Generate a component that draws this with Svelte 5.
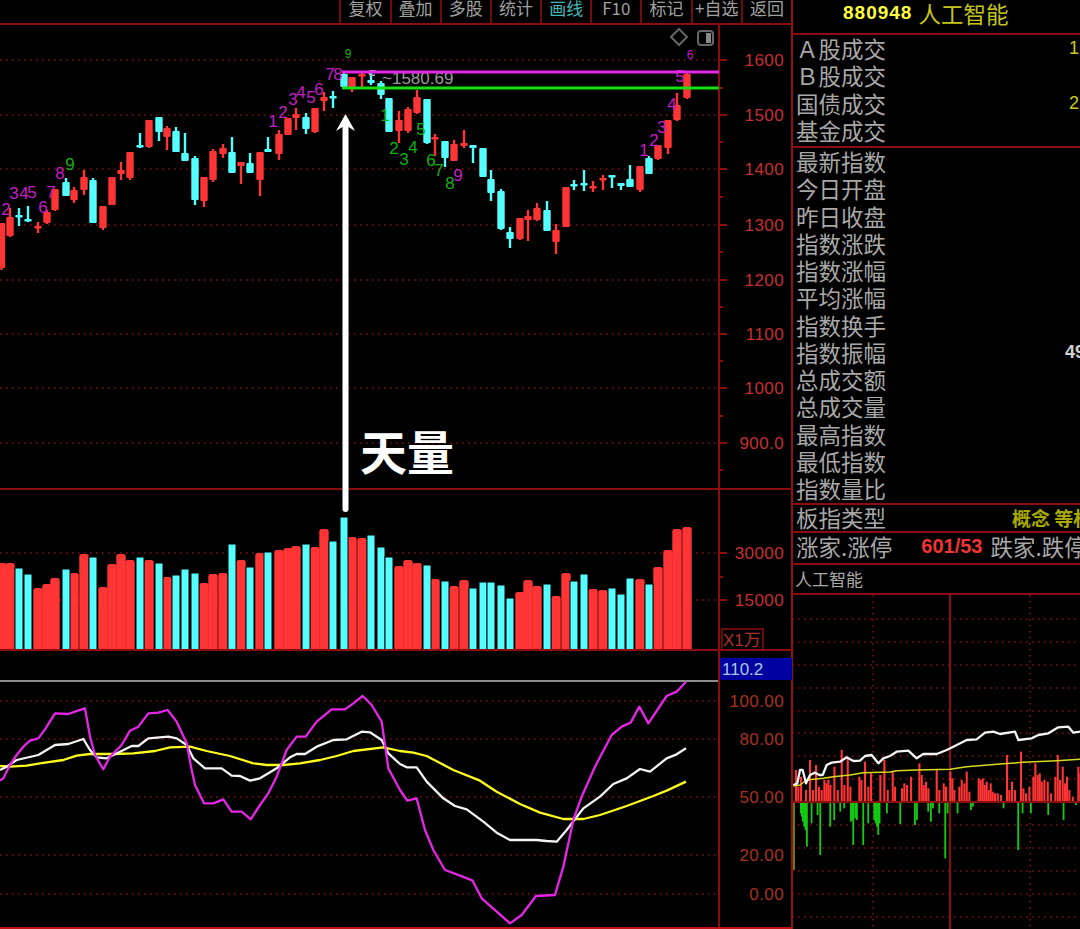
<script>
	// x, high, body top, body bottom, low, colour, volume top (all in page pixels)
	const candles = [
		[1.5,223,223,268,270,'r',563],[10,208,217,236,237,'r',563],[19,208,215,217,226,'c',568],[28,206,219,221,222,'c',574],
		[38,222,226,228,233,'r',588],[47,210,212,223,224,'r',584],[55,189,189,210,211,'r',578],[66,178,182,196,196,'c',569],
		[74,187,190,200,203,'r',573],[84,170,177,190,195,'r',554],[93,178,180,223,223,'c',557],[103,206,206,228,230,'r',587],
		[112,177,177,205,205,'r',564],[121,162,170,174,180,'r',554],[130,152,152,178,180,'r',560],[140,133,145,147,148,'c',557],
		[149,120,120,147,148,'r',560],[159,117,117,132,141,'c',563],[167,126,128,137,150,'r',577],[176,127,131,152,152,'c',575],
		[185,133,153,161,161,'c',569],[195,156,158,200,205,'c',573],[204,177,177,201,207,'r',583],[213,149,151,180,182,'r',574],
		[223,144,148,154,158,'r',573],[232,137,152,173,173,'c',544],[241,162,162,166,184,'r',560],[250,153,163,173,173,'c',567],
		[260,152,152,180,196,'r',553],[268,137,149,152,152,'c',552],[279,130,134,154,160,'r',550],[288,118,118,135,135,'r',548],
		[296,108,114,118,130,'r',546],[306,113,117,129,134,'c',544],[315,108,108,132,133,'r',547],[324,92,97,101,111,'r',529],
		[333,91,96,98,108,'c',541],[344,73,74,87,87,'c',517],[352,77,77,87,92,'r',537],[362,73,74,76,87,'r',538],
		[371,70,80,83,85,'c',535],[381,81,83,95,99,'c',547],[389,98,98,132,132,'c',557],[399,111,120,131,143,'r',566],
		[408,107,109,131,133,'r',560],[417,90,97,113,114,'r',563],[427,99,99,143,144,'c',565],[435,134,137,139,156,'r',579],
		[445,141,141,158,167,'c',581],[454,140,144,161,161,'r',586],[464,130,143,146,148,'r',580],[473,145,145,148,163,'c',588],
		[483,148,148,177,177,'c',582],[491,170,179,193,201,'c',582],[501,189,191,229,230,'c',585],[510,227,232,239,248,'c',598],
		[520,218,218,239,240,'r',592],[528,210,216,220,241,'r',580],[537,203,208,220,221,'r',586],[547,201,210,231,231,'c',584],
		[556,224,230,242,254,'r',596],[566,187,187,227,227,'r',573],[574,180,184,186,190,'c',581],[584,170,183,185,191,'c',574],
		[593,181,186,188,192,'r',589],[603,175,178,180,190,'r',590],[612,175,175,177,188,'c',588],[621,183,183,186,190,'c',594],
		[630,165,179,187,187,'c',578],[640,166,166,190,192,'r',579],[649,156,158,174,174,'c',584],[658,145,145,159,160,'r',567],
		[668,120,120,148,154,'r',550],[677,93,105,120,121,'r',529],[687,73,74,98,99,'r',527]
	];
	const colors = { r: '#ff3434', c: '#55ffff' };
	const redBars = candles.filter((c) => c[5] === 'r');
	const cyanBars = candles.filter((c) => c[5] === 'c');

	const priceLabels = [[60,'1600'],[115,'1500'],[169,'1400'],[225,'1300'],[280,'1200'],[334,'1100'],[388,'1000'],[443,'900.0']];
	const priceMinor = [88,142,197,252,307,361,416,470];
	const indexLabels = [[701,'100.00'],[739,'80.00'],[797,'50.00'],[855,'20.00'],[894,'0.00']];

	// turn-count digits over the candles
	const counts = [
		[6,209,'2'],[14,193,'3'],[24,193,'4'],[32,192,'5'],[43,207,'6'],[51,192,'7'],[60,173,'8'],[273,121,'1'],[283,112,'2'],
		[293,99,'3'],[301,92,'4'],[311,97,'5'],[319,89,'6'],[330,74,'7'],[338,74,'8'],[458,175,'9'],[644,150,'1'],[654,140,'2'],
		[662,127,'3'],[672,104,'4'],[680,76,'5']
	];
	const downCounts = [
		[70,164,'9'],[385,115,'1'],[394,148,'2'],[404,159,'3'],[413,147,'4'],[421,129,'5'],[431,160,'6'],[439,170,'7'],[450,183,'8']
	];

	const tools = ['复权','叠加','多股','统计','画线','F10','标记','+自选','返回'];
	const tradeRows = [['Ａ股成交','1'],['Ｂ股成交',''],['国债成交','2'],['基金成交','']];
	const indexRows = ['最新指数','今日开盘','昨日收盘','指数涨跌','指数涨幅','平均涨幅','指数换手','指数振幅','总成交额','总成交量','最高指数','最低指数','指数量比'];

	// lines were read off 3x crops, so points are crop coordinates
	const crop = (a, ox, oy) => a.map(([x, y]) => `${ox + x / 3},${oy + y / 3}`).join(' ');

	const pinkLine = crop([[0,332],[10,325],[30,285],[50,255],[70,230],[90,212],[115,205],[135,178],[165,130],[205,132],[225,125],[255,115],[270,200],[285,255],[310,298],[330,260],[350,240],[365,225],[390,182],[415,170],[445,130],[475,128],[503,120],[530,155],[560,220],[575,300],[585,345],[612,400],[640,400],[670,388],[695,425],[725,425],[752,448],[780,405],[805,370],[830,320],[860,240],[890,200],[917,200],[950,155],[995,118],[1035,118],[1060,100],[1088,78],[1115,105],[1145,155],[1165,295],[1200,360]], 0, 670)
		+ ' ' + crop([[22,392],[50,385],[75,480],[100,540],[135,600],[180,617],[218,632],[245,685],[330,760],[365,735],[408,678],[465,675],[490,590],[520,450],[545,380],[585,290],[635,195],[665,170],[692,158],[718,110],[745,160],[800,78],[830,65],[858,35]], 400, 670);
	const whiteLine = crop([[0,300],[20,290],[50,270],[115,255],[165,225],[205,222],[250,207],[270,240],[290,262],[320,265],[360,245],[395,228],[415,228],[445,205],[505,200],[530,205],[560,225],[580,265],[615,295],[665,295],[695,317],[720,318],[750,332],[780,325],[830,295],[870,262],[890,252],[915,252],[950,230],[1000,210],[1040,208],[1085,185],[1110,187],[1145,210],[1165,250],[1200,282]], 0, 670)
		+ ' ' + crop([[20,292],[50,292],[80,335],[130,385],[165,408],[200,418],[250,455],[290,488],[330,510],[410,510],[440,513],[470,515],[500,480],[550,415],[600,380],[640,342],[680,325],[720,297],[750,305],[800,265],[830,253],[858,235]], 400, 670);
	const yellowLine = crop([[0,288],[30,290],[80,287],[120,280],[190,270],[230,257],[270,252],[340,252],[400,250],[465,243],[510,232],[570,230],[620,243],[690,258],[760,280],[800,285],[850,285],[900,280],[960,270],[1010,258],[1060,243],[1150,232],[1200,243]], 0, 670)
		+ ' ' + crop([[40,248],[80,258],[160,300],[240,332],[290,365],[360,402],[420,428],[490,447],[550,447],[600,435],[680,408],[760,378],[800,362],[858,335]], 400, 670);

	const miniPrice = crop([[10,555],[22,550],[30,510],[38,510],[48,550],[60,525],[75,518],[88,525],[98,525],[110,495],[125,488],[150,485],[170,472],[190,483],[210,482],[225,468],[245,465],[265,490],[280,475],[300,468],[320,455],[355,452],[380,475],[400,462],[440,462],[470,450],[490,440],[530,420],[560,418],[585,398],[610,395],[630,402],[675,395],[685,420],[725,415],[745,405],[775,400],[805,382],[835,380],[850,398],[870,395]], 790, 600);
	const miniAvg = crop([[10,558],[30,555],[50,540],[100,535],[130,530],[180,525],[220,518],[300,516],[320,512],[380,510],[480,508],[530,500],[630,492],[700,487],[800,482],[870,478]], 790, 600);
	const miniUp = [[15,510],[22,560],[30,530],[45,570],[57,480],[66,570],[75,495],[84,560],[92,570],[100,540],[106,550],[112,540],[118,555],[130,500],[140,570],[152,450],[160,555],[170,470],[178,560],[205,530],[211,540],[222,485],[232,560],[240,520],[268,525],[280,480],[290,570],[305,515],[312,560],[333,565],[340,550],[348,555],[360,530],[385,490],[392,525],[398,555],[405,545],[412,565],[437,510],[445,570],[458,550],[465,560],[478,515],[484,535],[490,570],[505,560],[512,540],[520,550],[527,515],[535,575],[563,535],[569,540],[575,535],[581,555],[587,545],[593,570],[599,550],[605,575],[612,580],[620,580],[630,585],[648,465],[655,570],[663,545],[672,570],[690,455],[697,565],[705,580],[715,560],[727,530],[733,490],[740,525],[746,520],[752,545],[760,540],[770,545],[780,580],[793,530],[800,465],[807,540],[815,500],[822,550],[828,530],[835,570],[845,590],[862,500],[868,520]];
	const miniDown = [[30,640],[33,650],[36,665],[40,680],[44,690],[48,740],[62,670],[80,645],[88,765],[118,680],[130,660],[148,635],[160,625],[180,665],[184,660],[187,735],[193,655],[198,660],[217,735],[232,670],[250,660],[254,670],[258,680],[262,705],[266,670],[288,640],[328,672],[372,675],[378,660],[412,635],[420,665],[426,625],[445,640],[463,775],[470,640],[500,640],[540,630],[546,620],[638,625],[682,750],[695,640],[720,640],[772,645],[818,660],[855,615]];
	const miniGrid = [619,642,665,688,711,733,756,779,825,848,871,894,917];
</script>

<div class="screen">
	<div class="main">
		<div class="tools">
			{#each tools as t}
				<div class="tool" class:on={t === '画线'}>{t}</div>
			{/each}
		</div>

		<svg class="pane price" viewBox="0 25 792 463">
			{#each priceLabels as [y, label]}
				<line class="dots" x1="0" x2="719" y1={y} y2={y} />
				<line class="tick" x1="719" x2="727" y1={y} y2={y} />
				<text class="axis" x="784" y={y + 6}>{label}</text>
			{/each}
			{#each priceMinor as y}
				<line class="tick" x1="719" x2="723" y1={y} y2={y} />
			{/each}
			<line class="frame" x1="719" x2="719" y1="25" y2="489" />

			{#each candles as [x, high, top, bottom, low, c]}
				<rect x={x - 1.2} y={high} width="2.4" height={low - high} fill={colors[c]} />
				<rect x={x - 3.7} y={top} width="7.4" height={Math.max(bottom - top, 2.5)} rx="1" fill={colors[c]} />
			{/each}

			{#each counts as [x, y, n]}
				<text class="count up" {x} y={y + 6}>{n}</text>
			{/each}
			{#each downCounts as [x, y, n]}
				<text class="count down" {x} y={y + 6}>{n}</text>
			{/each}
			<text class="count small down" x="348" y="58">9</text>
			<text class="count small up" x="690" y="59">6</text>

			<path class="mark" d="M376 71 Q369 70 369 73 Q369 76 375 75" />
			<text class="hi" x="382" y="84">~1580.69</text>
			<line class="band pink" x1="342" x2="719" y1="72" y2="72" />
			<line class="band green" x1="342" x2="719" y1="88" y2="88" />

			<path class="glyph" d="M679 29 L687 37 L679 45 L671 37 Z" />
			<rect class="glyph" x="698" y="31" width="15" height="14" rx="3" />
			<rect class="glyph-fill" x="706" y="33" width="5" height="10" />
		</svg>

		<svg class="pane volume" viewBox="0 490 792 159">
			<line class="dots" x1="0" x2="719" y1="553" y2="553" />
			<line class="dots" x1="0" x2="719" y1="600" y2="600" />
			{#each redBars as [x, , , , , , v]}
				<rect x={x - 4.7} y={v} width="9.4" height={660 - v} rx="2.5" fill={colors.r} />
			{/each}
			{#each cyanBars as [x, , , , , , v]}
				<rect class="cyan-bar" x={x - 4} y={v} width="8" height={660 - v} fill={colors.c} />
			{/each}
			<line class="frame" x1="719" x2="719" y1="489" y2="650" />
			<line class="tick" x1="719" x2="727" y1="553" y2="553" />
			<line class="tick" x1="719" x2="727" y1="600" y2="600" />
			<line class="tick" x1="719" x2="723" y1="577" y2="577" />
			<text class="axis" x="784" y="559">30000</text>
			<text class="axis" x="784" y="606">15000</text>
			<rect class="unit-box" x="722" y="629" width="41" height="21" />
			<text class="unit" x="723" y="646">X1万</text>
		</svg>

		<svg class="pane index" viewBox="0 651 792 276">
			{#each indexLabels as [y, label]}
				<line class="dots" x1="0" x2="719" y1={y} y2={y} />
				<text class="axis dim" x="784" y={y + 6}>{label}</text>
			{/each}
			<line class="zero" x1="0" x2="719" y1="681" y2="681" />
			<rect x="720" y="658" width="72" height="22" fill="#0000a0" />
			<text class="last" x="722" y="675">110.2</text>
			<line class="frame" x1="719" x2="719" y1="651" y2="927" />
			<polyline class="curve" stroke="#ffff20" points={yellowLine} />
			<polyline class="curve" stroke="#f4f4f4" points={whiteLine} />
			<polyline class="curve" stroke="#e626e6" points={pinkLine} />
		</svg>

		<!-- hand-drawn annotation, runs across the price and volume panes -->
		<svg class="note" viewBox="0 0 792 929">
			<path class="arrow" d="M345.5 114 L355 131 L348.5 127 L348.5 509 A3 3 0 0 1 342.5 509 L342.5 127 L336 131 Z" />
			<text class="big" x="360" y="470">天量</text>
		</svg>
	</div>

	<div class="side">
		<div class="title"><b>880948</b><span>人工智能</span></div>
		<div class="group trade">
			{#each tradeRows as [label, value]}
				<div class="row"><span>{label}</span><em>{value}</em></div>
			{/each}
		</div>
		<div class="group stats">
			{#each indexRows as label}
				<div class="row">
					<span>{label}</span>
					{#if label === '指数振幅'}<strong>49</strong>{/if}
				</div>
			{/each}
		</div>
		<div class="group one">
			<div class="row"><span>板指类型</span><i>概念 等权</i></div>
		</div>
		<div class="group two">
			<div class="row"><span>涨家.涨停</span><u>601/53</u><span>跌家.跌停</span></div>
		</div>
		<div class="name">人工智能</div>
		<svg class="mini" viewBox="792 595 288 334">
			{#each miniGrid as y}
				<line class="dots" x1="792" x2="1080" y1={y} y2={y} />
			{/each}
			<line class="dots" x1="873" x2="873" y1="595" y2="929" />
			<line class="dots" x1="1030" x2="1030" y1="595" y2="929" />
			<line class="frame" x1="950" x2="950" y1="595" y2="929" />
			{#each miniUp as [x, y]}
				<rect x={790 + x / 3} y={600 + y / 3} width="2.1" height={202 - y / 3} fill="#ff3434" />
			{/each}
			{#each miniDown as [x, y]}
				<rect x={790 + x / 3} y="802" width="1.8" height={y / 3 - 202} fill="#12cc12" />
			{/each}
			<rect x="793" y="802" width="2" height="68" fill="#5f7f10" />
			<line class="frame" x1="792" x2="1080" y1="802" y2="802" />
			<polyline class="curve thin" stroke="#d8d820" points={miniAvg} />
			<polyline class="curve" stroke="#f4f4f4" points={miniPrice} />
		</svg>
	</div>
</div>

<style>
	:global(body) {
		background: #000;
	}
	.screen {
		display: flex;
		width: 1080px;
		height: 929px;
		overflow: hidden;
		background: #000;
		font-family: "Noto Sans CJK SC", "Liberation Sans", sans-serif;
	}
	.main {
		position: relative;
		flex: 0 0 792px;
		display: flex;
		flex-direction: column;
	}
	.tools {
		height: 23px;
		flex: none;
		display: grid;
		grid-template-columns: repeat(9, 50.2px);
		justify-content: end;
		padding-right: 1px;
		border-bottom: 2px solid #8c0d0d;
		overflow: hidden;
	}
	.tool {
		border-left: 2px solid #700c0c;
		color: #a0a0a0;
		font-size: 17px;
		line-height: 16px;
		text-align: center;
		white-space: nowrap;
	}
	.tool.on {
		color: #45b8b8;
	}
	.pane {
		display: block;
		width: 792px;
		flex: none;
		border-bottom: 2px solid #8c0d0d;
	}
	.price {
		height: 463px;
	}
	.volume {
		height: 159px;
	}
	.index {
		height: 276px;
		border-bottom-color: #c01010;
	}
	.note {
		position: absolute;
		top: 0;
		left: 0;
		width: 792px;
		height: 929px;
		pointer-events: none;
	}
	.dots {
		stroke: #8c1010;
		stroke-width: 1.5;
		stroke-dasharray: 1.5 4.5;
	}
	.tick,
	.frame {
		stroke: #8c0d0d;
		stroke-width: 2;
	}
	text {
		font-family: "Liberation Sans", sans-serif;
	}
	.axis {
		fill: #c62f2f;
		font-size: 17px;
		letter-spacing: 0.4px;
		text-anchor: end;
	}
	.axis.dim {
		fill: #a8321e;
	}
	.count {
		font-size: 17px;
		text-anchor: middle;
	}
	.count.small {
		font-size: 12px;
	}
	.up {
		fill: #c41fc4;
	}
	.down {
		fill: #10b010;
	}
	.hi {
		fill: #9a9a9a;
		font-size: 17px;
	}
	.mark {
		fill: none;
		stroke: #b0b0b0;
		stroke-width: 1.5;
	}
	.band {
		stroke-width: 3;
	}
	.pink {
		stroke: #e626e6;
	}
	.green {
		stroke: #14e014;
	}
	.glyph {
		fill: none;
		stroke: #666;
		stroke-width: 2;
	}
	.glyph-fill {
		fill: #8a8a8a;
	}
	.cyan-bar {
		stroke: #000;
		stroke-width: 1;
	}
	.arrow {
		fill: #fff;
	}
	.big {
		fill: #fff;
		font-family: "Noto Sans CJK SC", sans-serif;
		font-size: 47px;
		font-weight: 700;
	}
	.unit-box {
		fill: none;
		stroke: #8c0d0d;
		stroke-width: 1.5;
	}
	.unit {
		fill: #b03030;
		font-family: "Liberation Sans", "Noto Sans CJK SC", sans-serif;
		font-size: 17px;
	}
	.zero {
		stroke: #bdbdbd;
		stroke-width: 1.5;
	}
	.last {
		fill: #a8c8e8;
		font-size: 17px;
	}
	.curve {
		fill: none;
		stroke-width: 2.3;
		stroke-linejoin: round;
	}
	.curve.thin {
		stroke-width: 1.5;
	}
	.side {
		flex: 1;
		min-width: 0;
		display: flex;
		flex-direction: column;
		border-left: 2px solid #961010;
		margin-left: -1px;
		overflow: hidden;
	}
	.title {
		flex: none;
		height: 25px;
		display: flex;
		align-items: center;
		gap: 6px;
		padding-left: 50px;
		padding-bottom: 8px;
		border-bottom: 2px solid #8c0d0d;
		color: #ffff40;
		font-family: "Liberation Sans", sans-serif;
		font-size: 19px;
		letter-spacing: 1px;
	}
	.title span {
		color: #c4c41c;
		font-family: "Noto Sans CJK SC", sans-serif;
		font-size: 22.5px;
		letter-spacing: 0;
	}
	.group {
		flex: none;
		border-bottom: 2px solid #8c0d0d;
	}
	.group.trade {
		padding-bottom: 2px;
	}
	.group.stats {
		padding-bottom: 0.75px;
	}
	.row {
		display: flex;
		align-items: center;
		height: 27.25px;
		padding-left: 3px;
		color: #a8a8a8;
		font-size: 22.5px;
		line-height: 27px;
		white-space: nowrap;
	}
	.row em {
		margin-left: auto;
		margin-right: 1px;
		color: #c8c81e;
		font: 18px "Liberation Sans", sans-serif;
	}
	.row strong {
		margin-left: auto;
		margin-right: -5px;
		color: #d0d0d0;
		font: 700 18px "Liberation Sans", sans-serif;
	}
	.row i {
		margin-left: 126px;
		color: #a8a800;
		font-size: 19px;
		font-style: normal;
		font-weight: 700;
	}
	.row u {
		margin: 0 8px 0 29px;
		color: #f03434;
		font: 700 20px "Liberation Sans", sans-serif;
		text-decoration: none;
	}
	.group.one .row {
		height: 24px;
		padding-bottom: 2px;
	}
	.group.two .row {
		height: 27px;
		padding-bottom: 3px;
	}
	.name {
		flex: none;
		height: 28px;
		padding-left: 2px;
		border-bottom: 2px solid #8c0d0d;
		color: #a8a8a8;
		font-size: 17px;
		line-height: 28px;
	}
	.mini {
		flex: none;
		display: block;
		width: 288px;
		height: 334px;
		margin-left: -1px;
	}
</style>
